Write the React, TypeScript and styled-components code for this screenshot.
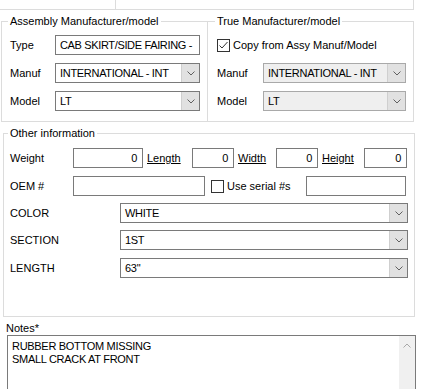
import styled, { createGlobalStyle } from "styled-components";

const GlobalStyle = createGlobalStyle`
  body {
    margin: 0;
    background: #fff;
    font-family: "Liberation Sans", Arial, sans-serif;
    font-size: 11px;
    color: #000;
  }
`;

const Page = styled.div`
  width: 432px;
  height: 389px;
  overflow: hidden;
  background: #fff;
`;

const TopStrip = styled.div`
  display: flex;
  width: 414px;
  height: 10px;
  box-sizing: border-box;
  border-bottom: 1px solid #dcdcdc;
`;

const TopCell = styled.div<{ $width?: number }>`
  ${(p) => (p.$width ? `width: ${p.$width}px;` : "flex: 1;")}
  box-sizing: border-box;
  border-right: 1px solid #dcdcdc;
`;

const GroupRow = styled.div`
  display: flex;
  margin-top: 5px;
  padding-left: 1px;
`;

const Group = styled.fieldset<{ $width: number; $noLeft?: boolean; $ml?: number; $mt?: number }>`
  margin: ${(p) => p.$mt ?? 0}px 0 0 ${(p) => p.$ml ?? 0}px;
  padding: 0;
  min-width: 0;
  width: ${(p) => p.$width}px;
  box-sizing: border-box;
  border: 1px solid #dcdcdc;
  ${(p) => (p.$noLeft ? "border-left: none;" : "")}
`;

const Legend = styled.legend<{ $ml: number }>`
  margin-left: ${(p) => p.$ml}px;
  padding: 0 2px;
  font-size: 11px;
  line-height: 13px;
`;

const GroupBody = styled.div<{ $pl: number; $pt: number; $pb: number }>`
  display: flex;
  flex-direction: column;
  padding: ${(p) => p.$pt}px 0 ${(p) => p.$pb}px ${(p) => p.$pl}px;
`;

const Row = styled.div<{ $mt?: number }>`
  display: flex;
  align-items: center;
  height: 20px;
  margin-top: ${(p) => p.$mt ?? 0}px;
`;

const Label = styled.span<{ $width: number; $ml?: number; $link?: boolean }>`
  width: ${(p) => p.$width}px;
  flex: none;
  margin-left: ${(p) => p.$ml ?? 0}px;
  white-space: nowrap;
  text-decoration: ${(p) => (p.$link ? "underline" : "none")};
`;

const TextBox = styled.div<{ $width: number; $right?: boolean; $height?: number }>`
  width: ${(p) => p.$width}px;
  height: ${(p) => p.$height ?? 20}px;
  flex: none;
  box-sizing: border-box;
  border: 1px solid #7a7a7a;
  background: #fff;
  display: flex;
  align-items: center;
  justify-content: ${(p) => (p.$right ? "flex-end" : "flex-start")};
  padding: ${(p) => (p.$right ? "0 5px 0 0" : "0 0 0 4px")};
  white-space: nowrap;
  overflow: hidden;
  letter-spacing: -0.35px;
`;

const ComboBox = styled.div<{ $width: number; $disabled?: boolean }>`
  width: ${(p) => p.$width}px;
  height: 20px;
  flex: none;
  box-sizing: border-box;
  border: 1px solid ${(p) => (p.$disabled ? "#a9a9a9" : "#7a7a7a")};
  background: ${(p) => (p.$disabled ? "#efefef" : "#fff")};
  display: flex;
`;

const ComboText = styled.div`
  flex: 1;
  display: flex;
  align-items: center;
  padding-left: 4px;
  white-space: nowrap;
  overflow: hidden;
  letter-spacing: -0.3px;
`;

const ComboButton = styled.div`
  width: 17px;
  flex: none;
  background: #e1e1e1;
  border-left: 1px solid #cfcfcf;
  display: flex;
  align-items: center;
  justify-content: center;
`;

const CheckBox = styled.div<{ $ml?: number }>`
  width: 13px;
  height: 13px;
  flex: none;
  box-sizing: border-box;
  margin-left: ${(p) => p.$ml ?? 0}px;
  border: 1px solid #333;
  background: #fff;
  display: flex;
`;

const CheckText = styled.span`
  margin-left: 3px;
  white-space: nowrap;
`;

const NotesLabel = styled.div`
  margin: 5px 0 0 6px;
  line-height: 13px;
`;

const NotesBox = styled.div`
  margin-left: 7px;
  width: 409px;
  height: 60px;
  box-sizing: border-box;
  border: 1px solid #7a7a7a;
  display: flex;
`;

const NotesText = styled.div`
  flex: 1;
  padding: 4px 0 0 4px;
  line-height: 13px;
  white-space: pre;
  letter-spacing: -0.3px;
`;

const ScrollBar = styled.div`
  width: 16px;
  background: #f0f0f0;
  display: flex;
  justify-content: center;
  padding-top: 7px;
  box-sizing: border-box;
`;

function Chevron({ up }: { up?: boolean }) {
  return (
    <svg width="8" height="5" viewBox="0 0 8 5">
      <polyline
        points={up ? "0.5,4.5 4,1 7.5,4.5" : "0.5,0.5 4,4 7.5,0.5"}
        fill="none"
        stroke={up ? "#a8a8a8" : "#606060"}
        strokeWidth="1"
      />
    </svg>
  );
}

function Combo({ value, width, disabled }: { value: string; width: number; disabled?: boolean }) {
  return (
    <ComboBox $width={width} $disabled={disabled}>
      <ComboText>{value}</ComboText>
      <ComboButton>
        <Chevron />
      </ComboButton>
    </ComboBox>
  );
}

function Check({ checked, ml }: { checked?: boolean; ml?: number }) {
  return (
    <CheckBox $ml={ml}>
      {checked && (
        <svg width="11" height="11" viewBox="0 0 11 11">
          <polyline points="1.5,5.5 4,8 9.5,2" fill="none" stroke="#333" strokeWidth="1" />
        </svg>
      )}
    </CheckBox>
  );
}

const details = [
  { label: "COLOR", value: "WHITE", mt: 7 },
  { label: "SECTION", value: "1ST", mt: 7 },
  { label: "LENGTH", value: "63\"", mt: 8 },
];

export default function App() {
  return (
    <Page>
      <GlobalStyle />
      <TopStrip>
        <TopCell $width={116} />
        <TopCell />
      </TopStrip>

      <GroupRow>
        <Group $width={207}>
          <Legend $ml={6}>Assembly Manufacturer/model</Legend>
          <GroupBody $pl={8} $pt={7} $pb={10}>
            <Row>
              <Label $width={45}>Type</Label>
              <TextBox $width={145}>CAB SKIRT/SIDE FAIRING -</TextBox>
            </Row>
            <Row $mt={8}>
              <Label $width={45}>Manuf</Label>
              <Combo width={145} value="INTERNATIONAL - INT" />
            </Row>
            <Row $mt={8}>
              <Label $width={45}>Model</Label>
              <Combo width={145} value="LT" />
            </Row>
          </GroupBody>
        </Group>
        <Group $width={206} $noLeft>
          <Legend $ml={7}>True Manufacturer/model</Legend>
          <GroupBody $pl={9} $pt={7} $pb={10}>
            <Row>
              <Check checked />
              <CheckText>Copy from Assy Manuf/Model</CheckText>
            </Row>
            <Row $mt={8}>
              <Label $width={46}>Manuf</Label>
              <Combo width={143} value="INTERNATIONAL - INT" disabled />
            </Row>
            <Row $mt={8}>
              <Label $width={46}>Model</Label>
              <Combo width={143} value="LT" disabled />
            </Row>
          </GroupBody>
        </Group>
      </GroupRow>

      <Group $width={412} $ml={3} $mt={5}>
        <Legend $ml={4}>Other information</Legend>
        <GroupBody $pl={6} $pt={8} $pb={38}>
          <Row>
            <Label $width={63}>Weight</Label>
            <TextBox $width={70} $right>0</TextBox>
            <Label $width={45} $ml={4} $link>Length</Label>
            <TextBox $width={42} $right>0</TextBox>
            <Label $width={38} $ml={4} $link>Width</Label>
            <TextBox $width={42} $right>0</TextBox>
            <Label $width={42} $ml={4} $link>Height</Label>
            <TextBox $width={43} $right>0</TextBox>
          </Row>
          <Row $mt={8}>
            <Label $width={63}>OEM #</Label>
            <TextBox $width={132} />
            <Check ml={6} />
            <Label $width={79} $ml={3}>Use serial #s</Label>
            <TextBox $width={100} />
          </Row>
          {details.map((d) => (
            <Row key={d.label} $mt={d.mt}>
              <Label $width={110}>{d.label}</Label>
              <Combo width={288} value={d.value} />
            </Row>
          ))}
        </GroupBody>
      </Group>

      <NotesLabel>Notes*</NotesLabel>
      <NotesBox>
        <NotesText>{"RUBBER BOTTOM MISSING\nSMALL CRACK AT FRONT"}</NotesText>
        <ScrollBar>
          <Chevron up />
        </ScrollBar>
      </NotesBox>
    </Page>
  );
}
